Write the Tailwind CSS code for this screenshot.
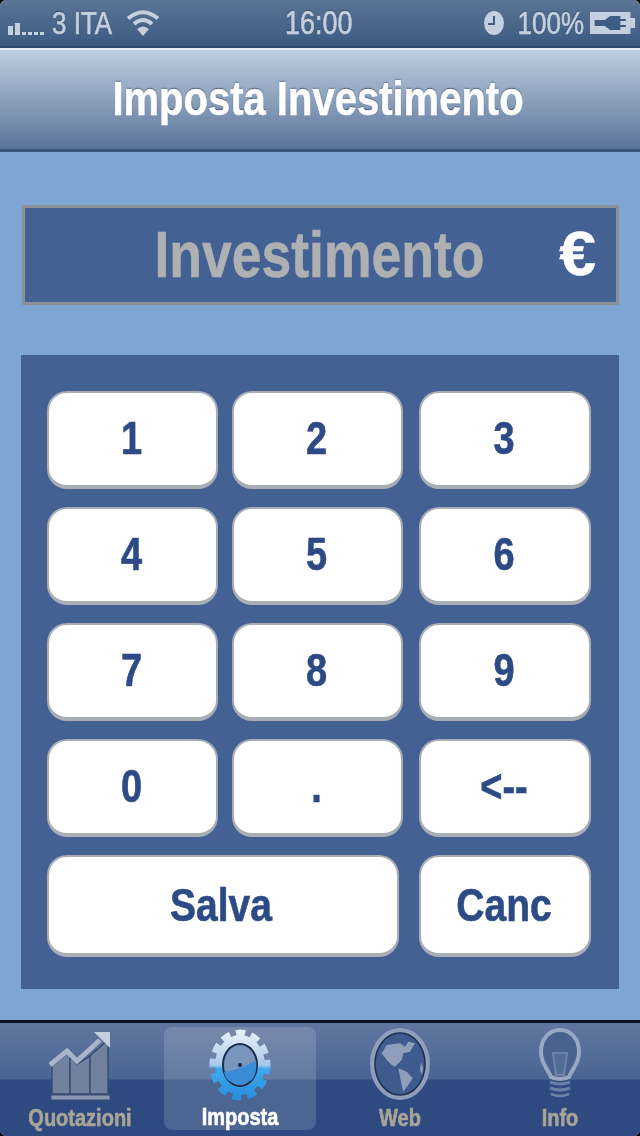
<!doctype html>
<html>
<head>
<meta charset="utf-8">
<script src="https://cdn.jsdelivr.net/npm/@tailwindcss/browser@4"></script>
</head>
<body class="m-0 bg-black">
<div class="w-[640px] h-[1136px] flex flex-col overflow-hidden rounded-[6px] blur-[0.4px] [-webkit-text-stroke:0.5px] font-['Liberation_Sans',Arial,sans-serif] bg-[#7fa5d4]">
  <!-- Status bar -->
  <div class="h-[48px] shrink-0 flex items-center relative bg-gradient-to-b from-[#5a7495] to-[#3c5a82] border-b-2 border-[#2f4a70] text-[#c4d0de] text-[26px] [text-shadow:0_-1px_1px_#2a3f5f]">
    <div class="flex items-center ml-[8px] w-[270px]">
      <svg width="40" height="18" viewBox="0 0 40 18" class="mt-[6px]"><g fill="#c4d0de"><rect x="0" y="9" width="5" height="9"/><rect x="7" y="6" width="5" height="12"/><rect x="14" y="15" width="4" height="3"/><rect x="20" y="15" width="4" height="3"/><rect x="26" y="15" width="4" height="3"/><rect x="32" y="15" width="4" height="3"/></g></svg>
      <span class="inline-block scale-y-[1.2] ml-[4px]">3 ITA</span>
      <svg width="34" height="28" viewBox="0 0 34 28" class="ml-[14px]"><g fill="none" stroke="#c4d0de" stroke-width="4"><path d="M2 9.500Q17 -3 32 9.500"/><path d="M8 15Q17 7 26 15"/></g><path d="M17 27L11 20Q17 15 23 20Z" fill="#c4d0de"/></svg>
    </div>
    <span class="absolute left-[285px] top-[3px] inline-block text-[27px] scale-y-[1.2]">16:00</span>
    <div class="ml-auto flex items-center mr-[4px]">
      <svg width="22" height="26" viewBox="0 0 22 26"><ellipse cx="11" cy="13" rx="10" ry="12" fill="#c4d0de"/><path d="M11 6V14H5" fill="none" stroke="#3f5c84" stroke-width="2"/></svg>
      <span class="inline-block scale-y-[1.2] ml-[13px]">100%</span>
      <svg width="46" height="28" viewBox="0 0 50 28" preserveAspectRatio="none" class="ml-[6px]"><path d="M0 3H44V9H49V19H44V25H0Z" fill="#c4d0de"/><path d="M5 11H16L22 7H33V10H39V12H33V16H39V18H33V21H22L16 17H5Z" fill="#3f5c84"/></svg>
    </div>
  </div>
  <!-- Nav bar -->
  <div class="h-[104px] shrink-0 flex items-center justify-center pb-[3px] border-t-2 border-[#e6ecf3] border-b-[3px] border-b-[#3c5479] bg-gradient-to-b from-[#c0cfe0] to-[#5a7499]">
    <span class="inline-block text-white font-bold text-[40px] -ml-[4px] scale-y-[1.2] [text-shadow:0_-1px_1px_#33435f]">Imposta Investimento</span>
  </div>
  <!-- Content -->
  <div class="flex-1 flex flex-col pt-[53px] pl-[21px] pr-[21px]">
    <div class="h-[100px] ml-[1px] relative flex items-center justify-center border-[3px] border-[#8b8f96] bg-[#446194]">
      <span class="inline-block font-bold text-[53.500px] text-[#aeb0b2] -ml-[2px] scale-y-[1.2]">Investimento</span>
      <span class="absolute right-[20px] top-[13px] inline-block font-bold text-[66px] leading-[64px] text-white scale-y-[0.95]">€</span>
    </div>
    <div class="mt-[50px] h-[634px] w-[598px] bg-[#446194] pt-[36px] pl-[26px] flex flex-col gap-[18px] [&>div>div]:pr-[2px]">
      <div class="flex h-[98px]">
        <div class="w-[171px] rounded-[20px] border-2 border-b-[4px] border-[#a9adb4] bg-white flex items-center justify-center"><span class="inline-block font-bold text-[38px] text-[#2c4a85] scale-y-[1.2]">1</span></div>
        <div class="w-[171px] ml-[14px] rounded-[20px] border-2 border-b-[4px] border-[#a9adb4] bg-white flex items-center justify-center"><span class="inline-block font-bold text-[38px] text-[#2c4a85] scale-y-[1.2]">2</span></div>
        <div class="w-[172px] ml-[16px] rounded-[20px] border-2 border-b-[4px] border-[#a9adb4] bg-white flex items-center justify-center"><span class="inline-block font-bold text-[38px] text-[#2c4a85] scale-y-[1.2]">3</span></div>
      </div>
      <div class="flex h-[98px]">
        <div class="w-[171px] rounded-[20px] border-2 border-b-[4px] border-[#a9adb4] bg-white flex items-center justify-center"><span class="inline-block font-bold text-[38px] text-[#2c4a85] scale-y-[1.2]">4</span></div>
        <div class="w-[171px] ml-[14px] rounded-[20px] border-2 border-b-[4px] border-[#a9adb4] bg-white flex items-center justify-center"><span class="inline-block font-bold text-[38px] text-[#2c4a85] scale-y-[1.2]">5</span></div>
        <div class="w-[172px] ml-[16px] rounded-[20px] border-2 border-b-[4px] border-[#a9adb4] bg-white flex items-center justify-center"><span class="inline-block font-bold text-[38px] text-[#2c4a85] scale-y-[1.2]">6</span></div>
      </div>
      <div class="flex h-[98px]">
        <div class="w-[171px] rounded-[20px] border-2 border-b-[4px] border-[#a9adb4] bg-white flex items-center justify-center"><span class="inline-block font-bold text-[38px] text-[#2c4a85] scale-y-[1.2]">7</span></div>
        <div class="w-[171px] ml-[14px] rounded-[20px] border-2 border-b-[4px] border-[#a9adb4] bg-white flex items-center justify-center"><span class="inline-block font-bold text-[38px] text-[#2c4a85] scale-y-[1.2]">8</span></div>
        <div class="w-[172px] ml-[16px] rounded-[20px] border-2 border-b-[4px] border-[#a9adb4] bg-white flex items-center justify-center"><span class="inline-block font-bold text-[38px] text-[#2c4a85] scale-y-[1.2]">9</span></div>
      </div>
      <div class="flex h-[98px]">
        <div class="w-[171px] rounded-[20px] border-2 border-b-[4px] border-[#a9adb4] bg-white flex items-center justify-center"><span class="inline-block font-bold text-[38px] text-[#2c4a85] scale-y-[1.2]">0</span></div>
        <div class="w-[171px] ml-[14px] rounded-[20px] border-2 border-b-[4px] border-[#a9adb4] bg-white flex items-center justify-center"><span class="inline-block font-bold text-[38px] text-[#2c4a85] scale-y-[1.2]">.</span></div>
        <div class="w-[172px] ml-[16px] rounded-[20px] border-2 border-b-[4px] border-[#a9adb4] bg-white flex items-center justify-center"><span class="inline-block font-bold text-[38px] text-[#2c4a85] scale-y-[1.2]">&lt;--</span></div>
      </div>
      <div class="flex h-[102px]">
        <div class="w-[352px] rounded-[20px] border-2 border-b-[4px] border-[#a9adb4] bg-white flex items-center justify-center"><span class="inline-block font-bold text-[39px] text-[#2c4a85] -ml-[2px] scale-y-[1.2]">Salva</span></div>
        <div class="w-[172px] ml-[20px] rounded-[20px] border-2 border-b-[4px] border-[#a9adb4] bg-white flex items-center justify-center"><span class="inline-block font-bold text-[39px] text-[#2c4a85] scale-y-[1.2]">Canc</span></div>
      </div>
    </div>
  </div>
  <!-- Tab bar -->
  <div class="h-[116px] shrink-0 flex border-t-[3px] border-[#0d1420] bg-[linear-gradient(to_bottom,#60769f_0px,#4a6492_56px,#2e4a80_57px,#2e4a80_100%)]">
    <div class="w-[160px] flex flex-col items-center pt-[5px]">
      <svg width="64" height="74" viewBox="0 0 64 74">
        <g fill="#71829f" stroke="#3a4d72" stroke-width="1.500"><path d="M4 38L20 25L22 28V66H4Z"/><path d="M22 28L29 36L42 28V66H22Z"/><path d="M42 28L60 12V66H42Z"/></g>
        <rect x="3" y="67" width="59" height="5" fill="#8a99b4" stroke="#3a4d72" stroke-width="1"/>
        <path d="M2 37L19 23L29 33L52 12" fill="none" stroke="#a8b4c8" stroke-width="5"/>
        <path d="M46 4H62V20Z" fill="#c6cfdd"/>
      </svg>
      <span class="inline-block font-bold text-[20px] leading-[24px] text-[#a8a597] scale-y-[1.2] mt-[4px]">Quotazioni</span>
    </div>
    <div class="w-[160px] px-[4px] pt-[4px] pb-[6px]">
      <div class="h-full rounded-[8px] bg-white/15 flex flex-col items-center pt-[1px]">
        <svg width="64" height="74" viewBox="0 0 64 74">
          <defs>
            <linearGradient id="g1" x1="0" y1="0" x2="0" y2="1"><stop offset="0" stop-color="#e4eef9"/><stop offset="0.5" stop-color="#a9c7ea"/><stop offset="0.56" stop-color="#3fa9ee"/><stop offset="1" stop-color="#2a8fdc"/></linearGradient>
          </defs>
          <ellipse cx="32" cy="37" rx="25" ry="30" fill="url(#g1)"/>
          <ellipse cx="32" cy="37" rx="27" ry="32" fill="none" stroke="url(#g1)" stroke-width="7" stroke-dasharray="9 6"/>
          <ellipse cx="32" cy="37" rx="17" ry="21" fill="#7a96bd" stroke="#1d2c4a" stroke-width="2"/>
          <path d="M16 44Q32 42 48 32Q50 50 40 54Q32 60 23 54Q17 51 16 44Z" fill="#3b8bd6"/>
          <circle cx="32" cy="37" r="2" fill="#1d2c4a"/>
        </svg>
        <span class="inline-block font-bold text-[20px] leading-[24px] text-white scale-y-[1.2] mt-[3px]">Imposta</span>
      </div>
    </div>
    <div class="w-[160px] flex flex-col items-center pt-[5px]">
      <svg width="64" height="74" viewBox="0 0 64 74">
        <ellipse cx="32" cy="36" rx="27.500" ry="33.500" fill="#3f5a8c" stroke="#8f9fbb" stroke-width="5"/>
        <ellipse cx="32" cy="36" rx="25" ry="31" fill="none" stroke="#1f2d4f" stroke-width="1.500"/>
        <path d="M13.700 25.300L18.700 17L32 15.300L37 18.700L40.300 13.700L47 15.300L42 23.700L35.300 25.300L33.700 32L27 38.700L23.700 37L18.700 32Z" fill="#8f9fbb"/>
        <path d="M30.300 40.300L38.700 43.700L44.700 50.300L40.300 57L35.300 63.700L33.700 57L32 48.700Z" fill="#8f9fbb"/>
        <path d="M53 34L55 40L54 47L52 42Z" fill="#8f9fbb"/>
      </svg>
      <span class="inline-block font-bold text-[20px] leading-[24px] text-[#a8a597] scale-y-[1.2] mt-[4px]">Web</span>
    </div>
    <div class="w-[160px] flex flex-col items-center pt-[5px]">
      <svg width="64" height="74" viewBox="0 0 64 74">
        <path d="M32 2C20 2 13 12 13 24C13 36 20 41 23 49Q32 53 41 49C44 41 51 36 51 24C51 12 44 2 32 2Z" fill="#49628f" stroke="#98a8c2" stroke-width="4"/>
        <path d="M25 25H39L36 47H28Z" fill="#536b96" stroke="#6f83a6" stroke-width="2"/>
        <g fill="none" stroke="#6c80a5" stroke-width="3"><path d="M22 54Q32 58 42 54"/><path d="M22 60Q32 64 42 60"/><path d="M23 66Q32 70 41 66"/></g>
      </svg>
      <span class="inline-block font-bold text-[20px] leading-[24px] text-[#a8a597] scale-y-[1.2] mt-[4px]">Info</span>
    </div>
  </div>
</div>
</body>
</html>
